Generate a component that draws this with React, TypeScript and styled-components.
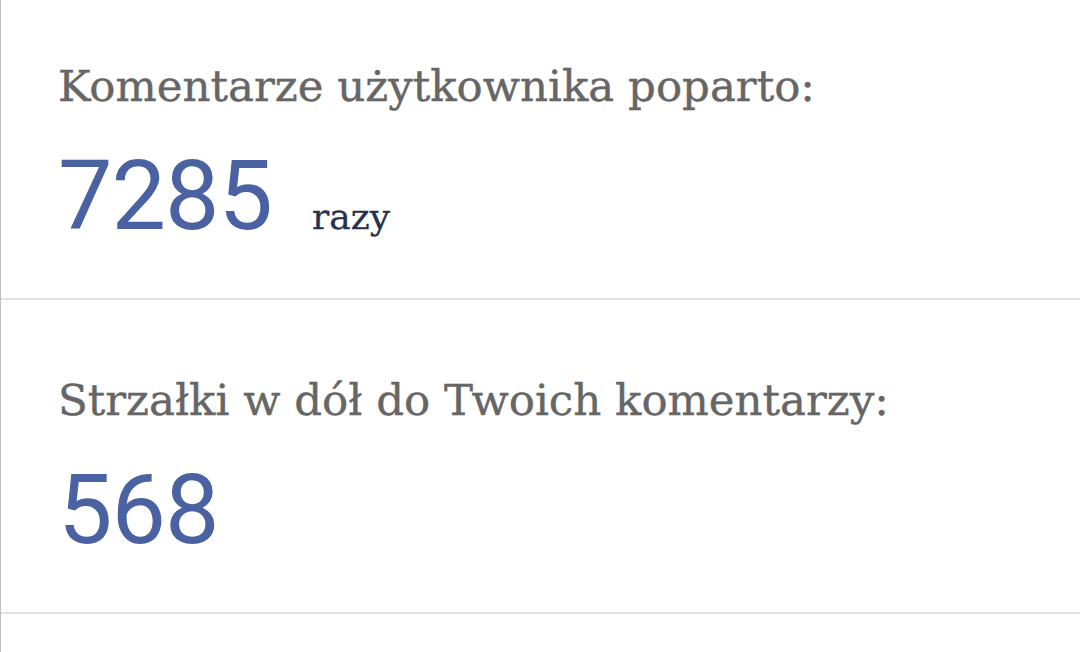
import React from "react";
import styled, { createGlobalStyle } from "styled-components";

const Global = createGlobalStyle`
  html, body { margin: 0; padding: 0; background: #ffffff; }
  body { width: 1080px; height: 652px; overflow: hidden; }
`;

const Page = styled.div`
  width: 1080px;
  height: 652px;
  box-sizing: border-box;
  border-left: 1px solid #bdbdbd;
  display: flex;
  flex-direction: column;
  background: #fff;
`;

const Section = styled.section<{ $h: number; $top: number }>`
  height: ${(p) => p.$h}px;
  box-sizing: border-box;
  padding: ${(p) => p.$top}px 0 0 57px;
  border-bottom: 2px solid #e3e3e3;
  display: flex;
  flex-direction: column;
  flex-shrink: 0;
`;

const Label = styled.div`
  font-family: "DejaVu Serif", serif;
  font-size: 43.5px;
  line-height: 52px;
  color: #666666;
  -webkit-text-stroke: 0.4px #666666;
  white-space: nowrap;
`;

const ValueRow = styled.div`
  display: flex;
  align-items: baseline;
  gap: 40px;
  margin-top: 34px;
`;

const Value = styled.span`
  font-family: Roboto, sans-serif;
  font-size: 97px;
  line-height: 100px;
  color: #4a62a1;
  letter-spacing: -1px;
`;

const Unit = styled.span`
  font-family: "DejaVu Serif", serif;
  font-size: 36px;
  color: #27304c;
  -webkit-text-stroke: 0.3px #27304c;
`;

export default function App() {
  return (
    <>
      <Global />
      <Page>
        <Section $h={300} $top={60}>
          <Label>Komentarze użytkownika poparto:</Label>
          <ValueRow>
            <Value>7285</Value>
            <Unit>razy</Unit>
          </ValueRow>
        </Section>
        <Section $h={314} $top={74}>
          <Label>Strzałki w dół do Twoich komentarzy:</Label>
          <ValueRow>
            <Value>568</Value>
          </ValueRow>
        </Section>
      </Page>
    </>
  );
}
